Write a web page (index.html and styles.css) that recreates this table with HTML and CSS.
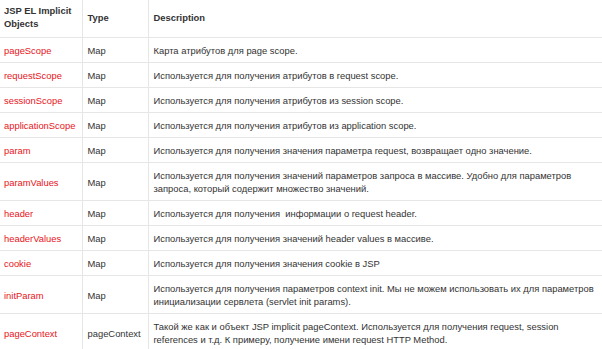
FILE: index.html
```html
<!DOCTYPE html>
<html lang="ru">
  <head>
    <meta charset="UTF-8" />
    <meta name="viewport" content="width=device-width, initial-scale=1.0" />
    <title>JSP EL Implicit Objects</title>
    <link rel="stylesheet" href="styles.css">
  </head>
  <body>
    <table class="objects-table">
      <colgroup>
        <col class="col-name" />
        <col class="col-type" />
        <col class="col-desc" />
      </colgroup>
      <thead>
        <tr>
          <th>JSP EL Implicit Objects</th>
          <th>Type</th>
          <th>Description</th>
        </tr>
      </thead>
      <tbody>
        <tr>
          <td class="obj">pageScope</td>
          <td>Map</td>
          <td>Карта атрибутов для page scope.</td>
        </tr>
        <tr>
          <td class="obj">requestScope</td>
          <td>Map</td>
          <td>Используется для получения атрибутов в request scope.</td>
        </tr>
        <tr>
          <td class="obj">sessionScope</td>
          <td>Map</td>
          <td>Используется для получения атрибутов из session scope.</td>
        </tr>
        <tr>
          <td class="obj">applicationScope</td>
          <td>Map</td>
          <td>Используется для получения атрибутов из application scope.</td>
        </tr>
        <tr>
          <td class="obj">param</td>
          <td>Map</td>
          <td>Используется для получения значения параметра request, возвращает одно значение.</td>
        </tr>
        <tr>
          <td class="obj">paramValues</td>
          <td>Map</td>
          <td>Используется для получения значений параметров запроса в массиве. Удобно для параметров запроса, который содержит множество значений.</td>
        </tr>
        <tr>
          <td class="obj">header</td>
          <td>Map</td>
          <td>Используется для получения &nbsp;информации о request header.</td>
        </tr>
        <tr>
          <td class="obj">headerValues</td>
          <td>Map</td>
          <td>Используется для получения значений header values в массиве.</td>
        </tr>
        <tr>
          <td class="obj">cookie</td>
          <td>Map</td>
          <td>Используется для получения значения cookie в JSP</td>
        </tr>
        <tr>
          <td class="obj">initParam</td>
          <td>Map</td>
          <td>Используется для получения параметров context init. Мы не можем использовать их для параметров инициализации сервлета (servlet init params).</td>
        </tr>
        <tr>
          <td class="obj">pageContext</td>
          <td>pageContext</td>
          <td>Такой же как и объект JSP implicit pageContext. Используется для получения request, session references и т.д. К примеру, получение имени request HTTP Method.</td>
        </tr>
      </tbody>
    </table>
  </body>
</html>
```

FILE: styles.css
```css
body {
  margin: 0;
  background: #fff;
  font-family: "Liberation Sans", Arial, sans-serif;
  font-size: 9.4px;
  color: #333;
}
.objects-table {
  width: 602px;
  border-collapse: collapse;
  table-layout: fixed;
}
.col-name {
  width: 82px;
}
.col-type {
  width: 66px;
}
.objects-table th,
.objects-table td {
  padding: 6px 5px 5px;
  line-height: 13px;
  border: 1px solid #e6e6e6;
  text-align: left;
  vertical-align: middle;
}
.objects-table th {
  font-weight: bold;
  border-top: none;
  padding-top: 4px;
  padding-bottom: 7px;
}
.objects-table th:first-child,
.objects-table td:first-child {
  border-left: none;
  padding-left: 4px;
}
.objects-table th:last-child,
.objects-table td:last-child {
  border-right: none;
  padding-right: 3px;
}
.obj {
  color: #e8141b;
}
```
